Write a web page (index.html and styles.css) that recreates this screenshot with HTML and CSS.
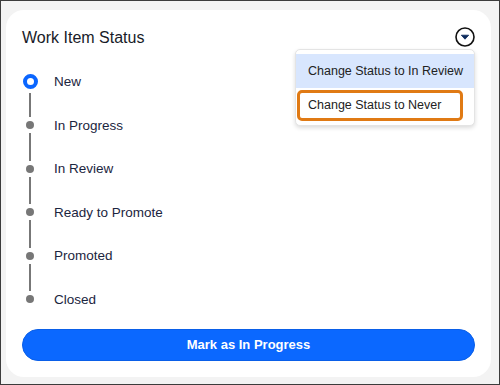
FILE: index.html
```html
<!DOCTYPE html>
<html>
<head>
    <meta charset="UTF-8" />
    <title>Work Item Status</title>

    <link rel="stylesheet" href="styles.css">
</head>
<body>
    <div class="frame">
        <div class="card">
            <div class="header">
                <h1 class="title">Work Item Status</h1>
                <button class="menu-toggle" aria-label="Show actions">
                    <svg width="20" height="20" viewBox="0 0 20 20">
                        <circle cx="10" cy="10" r="9" fill="#fff" stroke="#111" stroke-width="1.6" />
                        <path d="M6.3 8.2 L13.7 8.2 L10 12.2 Z" fill="#0b2a5c" stroke="#0b2a5c" stroke-width="0.8" stroke-linejoin="round" />
                    </svg>
                </button>
            </div>

            <ul class="menu">
                <li class="menu-item menu-item-hover">Change Status to In Review</li>
                <li class="menu-item menu-item-focus">Change Status to Never</li>
            </ul>

            <ol class="steps">
                <li class="step step-current">
                    <span class="marker"><span class="line"></span><span class="dot"></span><span class="line"></span></span>
                    <span class="label">New</span>
                </li>
                <li class="step">
                    <span class="marker"><span class="line"></span><span class="dot"></span><span class="line"></span></span>
                    <span class="label">In Progress</span>
                </li>
                <li class="step">
                    <span class="marker"><span class="line"></span><span class="dot"></span><span class="line"></span></span>
                    <span class="label">In Review</span>
                </li>
                <li class="step">
                    <span class="marker"><span class="line"></span><span class="dot"></span><span class="line"></span></span>
                    <span class="label">Ready to Promote</span>
                </li>
                <li class="step">
                    <span class="marker"><span class="line"></span><span class="dot"></span><span class="line"></span></span>
                    <span class="label">Promoted</span>
                </li>
                <li class="step">
                    <span class="marker"><span class="line"></span><span class="dot"></span><span class="line"></span></span>
                    <span class="label">Closed</span>
                </li>
            </ol>

            <button class="primary">Mark as In Progress</button>
        </div>
    </div>
</body>
</html>
```

FILE: styles.css
```css
body {
    margin: 0;
    font-family: "Liberation Sans", Arial, sans-serif;
}

.frame {
    box-sizing: border-box;
    width: 500px;
    height: 385px;
    padding: 9px 0 0 5px;
    border: 1px solid #3c3c3c;
    background-color: #f3f3f3;
}

.card {
    position: relative;
    box-sizing: border-box;
    width: 485px;
    height: 367px;
    padding: 17px 16px 16px 16px;
    background-color: #ffffff;
    border-radius: 18px;
}

.header {
    display: flex;
    justify-content: space-between;
    align-items: flex-start;
}

.title {
    margin: 0;
    font-size: 16px;
    font-weight: normal;
    line-height: 22px;
    color: #181b28;
}

.menu-toggle {
    width: 20px;
    height: 20px;
    padding: 0;
    border: none;
    background: none;
}

.menu-toggle svg {
    display: block;
}

.menu {
    position: absolute;
    top: 39px;
    left: 289px;
    width: 180px;
    margin: 0;
    padding: 4px 0 5px 0;
    list-style: none;
    background-color: #ffffff;
    border: 1px solid #e4e4e4;
    border-radius: 5px;
    box-shadow: 0 2px 4px rgba(0, 0, 0, 0.14);
    box-sizing: border-box;
    height: 77px;
}

.menu-item {
    font-size: 12.5px;
    color: #222222;
    white-space: nowrap;
}

.menu-item-hover {
    height: 34px;
    line-height: 34px;
    padding-left: 12px;
    background-color: #d8e6fe;
}

.menu-item-focus {
    height: 31px;
    line-height: 25px;
    margin: 2px 11px 0 1px;
    padding-left: 8px;
    border: 3px solid #e07a14;
    border-radius: 5px;
    box-sizing: border-box;
}

.steps {
    margin: 10.7px 0 8px 0;
    padding: 0;
    list-style: none;
}

.step {
    display: flex;
    align-items: center;
    height: 43.6px;
}

.marker {
    display: flex;
    flex-direction: column;
    align-items: center;
    width: 16px;
    height: 100%;
    margin-left: 0;
    margin-right: 16px;
}

.line {
    flex: 1;
    width: 2px;
    background-color: #777777;
}

.line:first-child {
    margin-bottom: 4px;
}

.line:last-child {
    margin-top: 4px;
}

.step:first-child .line:first-child,
.step:last-child .line:last-child {
    visibility: hidden;
}

.dot {
    width: 8px;
    height: 8px;
    border-radius: 50%;
    background-color: #777777;
}

.step-current .dot {
    box-sizing: border-box;
    width: 15px;
    height: 15px;
    border: 4px solid #0b66ff;
    background-color: #ffffff;
}

.label {
    font-size: 13.5px;
    color: #1b2540;
}

.primary {
    display: block;
    width: 100%;
    height: 31.4px;
    padding: 0;
    font-family: "Liberation Sans", Arial, sans-serif;
    font-size: 13px;
    font-weight: bold;
    color: #ffffff;
    background-color: #0b68ff;
    border: 1px solid #0a5fe8;
    border-radius: 16px;
}
```
